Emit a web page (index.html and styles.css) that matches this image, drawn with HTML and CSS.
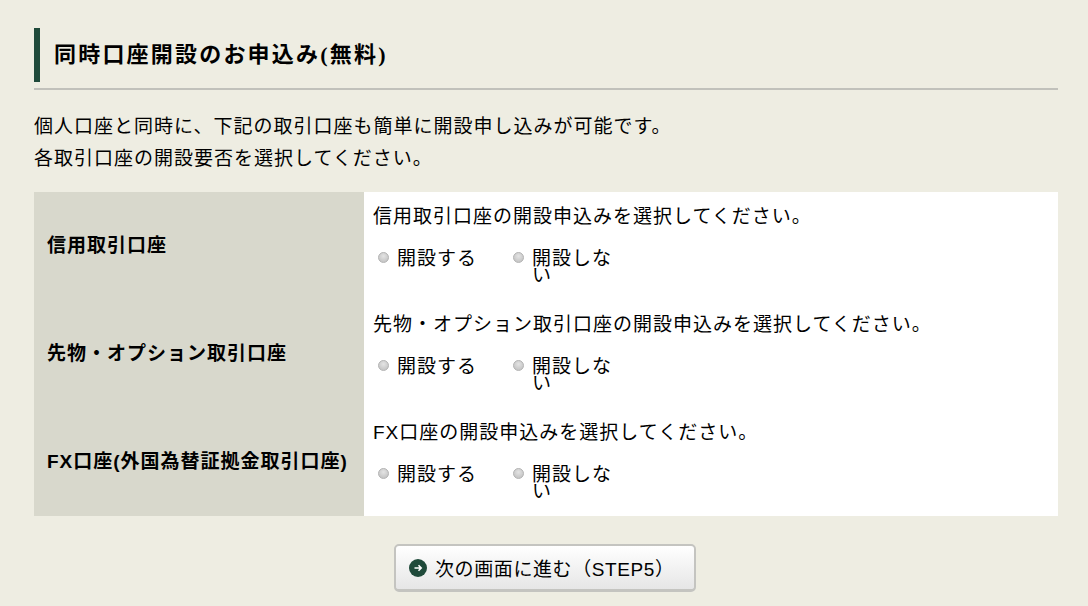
FILE: index.html
```html
<!DOCTYPE html>
<html lang="ja">
<head>
    <meta charset="UTF-8" />
    <title>同時口座開設のお申込み</title>
    <link rel="stylesheet" href="styles.css">
</head>
<body>
    <div class="titulo">
        <h2>同時口座開設のお申込み(無料)</h2>
    </div>

    <p class="intro">
        個人口座と同時に、下記の取引口座も簡単に開設申し込みが可能です。<br />
        各取引口座の開設要否を選択してください。
    </p>

    <table class="tabla">
        <tr>
            <th>信用取引口座</th>
            <td>
                <p class="pregunta">信用取引口座の開設申込みを選択してください。</p>
                <div class="opciones">
                    <label class="opcion"><input type="radio" name="shinyo" /><span>開設する</span></label>
                    <label class="opcion"><input type="radio" name="shinyo" /><span>開設しない</span></label>
                </div>
            </td>
        </tr>
        <tr>
            <th>先物・オプション取引口座</th>
            <td>
                <p class="pregunta">先物・オプション取引口座の開設申込みを選択してください。</p>
                <div class="opciones">
                    <label class="opcion"><input type="radio" name="sakimono" /><span>開設する</span></label>
                    <label class="opcion"><input type="radio" name="sakimono" /><span>開設しない</span></label>
                </div>
            </td>
        </tr>
        <tr>
            <th>FX口座(外国為替証拠金取引口座)</th>
            <td>
                <p class="pregunta">FX口座の開設申込みを選択してください。</p>
                <div class="opciones">
                    <label class="opcion"><input type="radio" name="fx" /><span>開設する</span></label>
                    <label class="opcion"><input type="radio" name="fx" /><span>開設しない</span></label>
                </div>
            </td>
        </tr>
    </table>

    <div class="acciones">
        <button class="boton">
            <svg class="flecha" width="18" height="18" viewBox="0 0 18 18" aria-hidden="true">
                <circle cx="9" cy="9" r="9" fill="#1f4a3a" />
                <path d="M5.5 9h6.5M9.5 6.3 12.2 9l-2.7 2.7" fill="none" stroke="#fff" stroke-width="1.6" />
            </svg>
            次の画面に進む（STEP5）
        </button>
    </div>
</body>
</html>
```

FILE: styles.css
```css
body {
    margin: 0;
    padding: 28px 30px 0 34px;
    background-color: #eeede2;
    color: #000;
    font-family: "Liberation Sans", "Noto Sans CJK JP", sans-serif;
    font-size: 19px;
    letter-spacing: 1px;
}
.titulo {
    border-bottom: 2px solid #c1c1bb;
    padding-bottom: 6px;
}
.titulo h2 {
    margin: 0;
    height: 54px;
    line-height: 54px;
    border-left: 6px solid #1f4a3a;
    padding-left: 14px;
    font-family: "Liberation Serif", "Noto Sans CJK JP", serif;
    font-size: 22px;
    letter-spacing: 2.2px;
}
.intro {
    margin: 21px 0 17px;
    line-height: 32px;
}
.tabla {
    width: 100%;
    border-collapse: collapse;
    background-color: #fff;
}
.tabla th {
    width: 330px;
    height: 108px;
    box-sizing: border-box;
    padding: 0 0 5px 13px;
    background-color: #d8d8cc;
    text-align: left;
    font-size: 19px;
    letter-spacing: 1px;
}
.tabla td {
    height: 108px;
    box-sizing: border-box;
    padding: 0 0 0 9px;
    vertical-align: top;
}
.pregunta {
    margin: 12px 0 20px;
    line-height: 26px;
}
.opciones {
    display: flex;
}
.opcion {
    display: flex;
    align-items: flex-start;
    width: 135px;
    line-height: 17px;
}
.opcion input {
    appearance: none;
    flex-shrink: 0;
    width: 11px;
    height: 11px;
    margin: 2px 8px 0 5px;
    border: 1px solid #b5b5b5;
    border-radius: 50%;
    background: radial-gradient(circle at 50% 35%, #e4e4e4, #bcbcbc);
}
.opcion span {
    width: 84px;
}
.acciones {
    display: flex;
    justify-content: center;
    margin: 28px 2px 0 0;
}
.boton {
    display: flex;
    align-items: center;
    gap: 8px;
    width: 302px;
    height: 48px;
    box-sizing: border-box;
    padding: 0 0 0 13px;
    border: 2px solid #c4c4c0;
    border-bottom-width: 3px;
    border-radius: 5px;
    background: linear-gradient(#fff, #e6e6e6);
    color: #000;
    font-family: inherit;
    font-size: 19px;
    letter-spacing: 0.6px;
    cursor: pointer;
}
```
